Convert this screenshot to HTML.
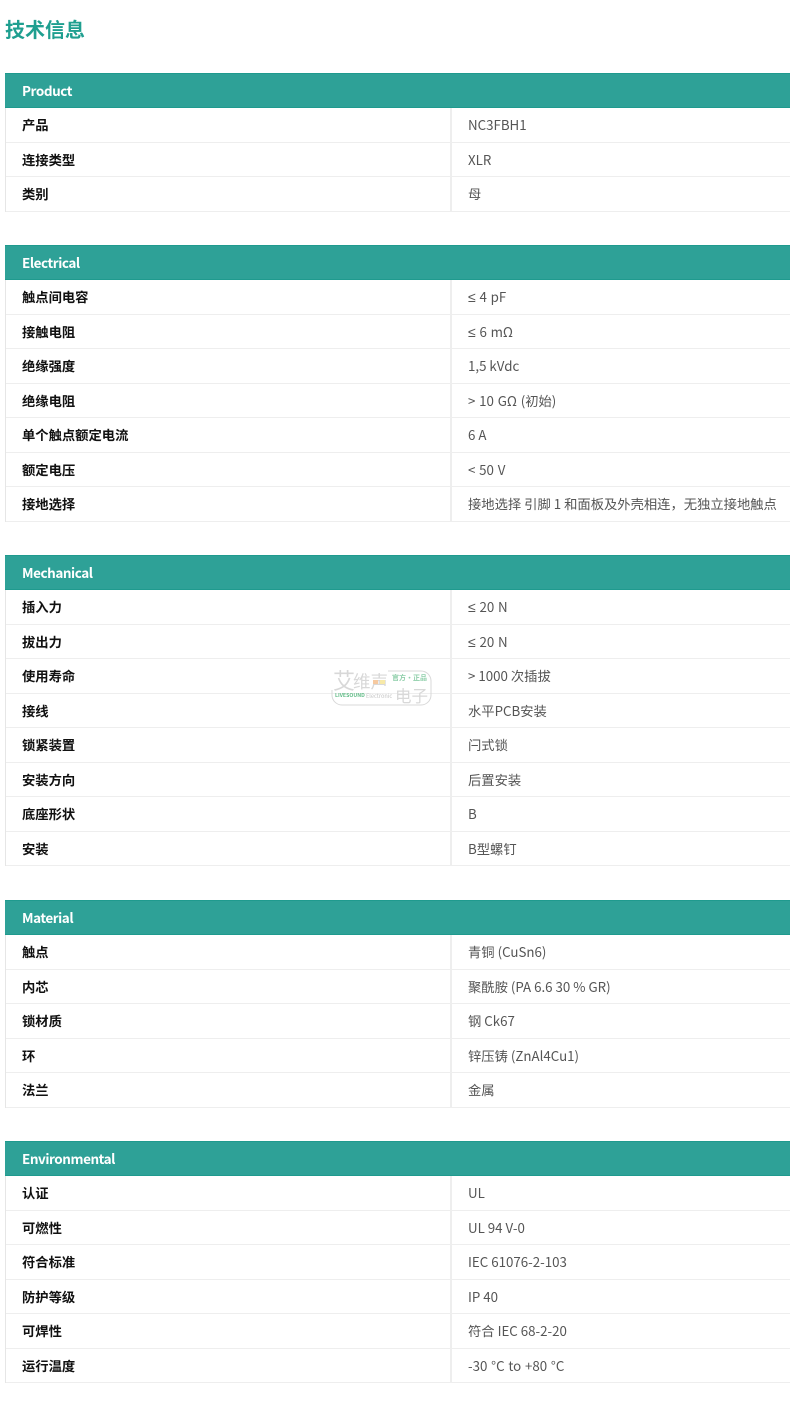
<!DOCTYPE html>
<html lang="zh"><head><meta charset="utf-8"><title>技术信息</title>
<style>
html,body{margin:0;padding:0;background:#fff}
body{width:790px;height:1405px;position:relative;overflow:hidden;font-family:"Liberation Sans","Noto Sans CJK SC",sans-serif}
h1{position:absolute;left:5px;top:14px;margin:0;font-size:20px;line-height:29px;font-weight:700;color:#1f9f90;font-family:"Noto Sans CJK SC",sans-serif}
.t{position:absolute;left:5px;width:785px;border-left:1px solid #e6e6e6;box-sizing:border-box}
.h{height:35px;margin-left:-1px;background:#2ea197;border-top:1px solid #1f9a8e;border-bottom:1px solid #1f9a8e;box-sizing:border-box;color:#fff;font:700 13.5px/32px "Noto Sans CJK SC",sans-serif;letter-spacing:-.45px;padding-left:17px}
.r{height:34.5px;border-bottom:1px solid #eee;box-sizing:border-box;position:relative;font-size:13.3px;line-height:34px;font-family:"Noto Sans CJK SC",sans-serif}
.r b{position:absolute;left:16px;top:0;color:#111;font-weight:700;white-space:nowrap}
.r span{position:absolute;left:444px;top:0;bottom:0;border-left:2px solid #eee;padding-left:16px;color:#555;white-space:nowrap}
.r span.w{word-spacing:.8px}
em{font-style:normal;font-family:"Liberation Sans",sans-serif;font-size:14px}
.wm{position:absolute;left:0;top:0;width:790px;height:1405px;pointer-events:none}
.wm svg{position:absolute;left:0;top:0}
.wm i{position:absolute;font-style:normal;white-space:nowrap;font-family:"Noto Sans CJK SC",sans-serif;color:#d8d8d8}
</style></head><body>
<h1>技术信息</h1>

<div class="t" style="top:73px"><div class="h">Product</div>
<div class="r"><b>产品</b><span>NC3FBH1</span></div>
<div class="r"><b>连接类型</b><span>XLR</span></div>
<div class="r"><b>类别</b><span>母</span></div></div>

<div class="t" style="top:245px"><div class="h">Electrical</div>
<div class="r"><b>触点间电容</b><span class="w"><em>≤</em> 4 pF</span></div>
<div class="r"><b>接触电阻</b><span class="w"><em>≤</em> 6 mΩ</span></div>
<div class="r"><b>绝缘强度</b><span>1,5 kVdc</span></div>
<div class="r"><b>绝缘电阻</b><span class="w">&gt; 10 GΩ (初始)</span></div>
<div class="r"><b>单个触点额定电流</b><span>6 A</span></div>
<div class="r"><b>额定电压</b><span class="w">&lt; 50 V</span></div>
<div class="r"><b>接地选择</b><span>接地选择 引脚 1 和面板及外壳相连，无独立接地触点</span></div></div>

<div class="t" style="top:555px"><div class="h">Mechanical</div>
<div class="r"><b>插入力</b><span class="w"><em>≤</em> 20 N</span></div>
<div class="r"><b>拔出力</b><span class="w"><em>≤</em> 20 N</span></div>
<div class="r"><b>使用寿命</b><span>&gt; 1000 次插拔</span></div>
<div class="r"><b>接线</b><span>水平PCB安装</span></div>
<div class="r"><b>锁紧装置</b><span>闩式锁</span></div>
<div class="r"><b>安装方向</b><span>后置安装</span></div>
<div class="r"><b>底座形状</b><span>B</span></div>
<div class="r"><b>安装</b><span>B型螺钉</span></div></div>

<div class="t" style="top:900px"><div class="h">Material</div>
<div class="r"><b>触点</b><span>青铜 (CuSn6)</span></div>
<div class="r"><b>内芯</b><span>聚酰胺 (PA 6.6 30 % GR)</span></div>
<div class="r"><b>锁材质</b><span>钢 Ck67</span></div>
<div class="r"><b>环</b><span>锌压铸 (ZnAl4Cu1)</span></div>
<div class="r"><b>法兰</b><span>金属</span></div></div>

<div class="t" style="top:1141px"><div class="h">Environmental</div>
<div class="r"><b>认证</b><span>UL</span></div>
<div class="r"><b>可燃性</b><span>UL 94 V-0</span></div>
<div class="r"><b>符合标准</b><span>IEC 61076-2-103</span></div>
<div class="r"><b>防护等级</b><span>IP 40</span></div>
<div class="r"><b>可焊性</b><span>符合 IEC 68-2-20</span></div>
<div class="r"><b>运行温度</b><span class="w">-30 °C to +80 °C</span></div></div>

<div class="wm">
<svg width="790" height="1405" viewBox="0 0 790 1405">
<path d="M388 671H421a10 10 0 0 1 10 10V695a10 10 0 0 1-10 10H342a10 10 0 0 1-10-10V690" fill="none" stroke="#d8d8d8" stroke-width="1"/>
</svg>
<i style="left:333px;top:667px;font-size:22px;line-height:26px">艾</i>
<i style="left:353px;top:671px;font-size:17.5px;line-height:21px">维声</i>
<svg width="790" height="1405" viewBox="0 0 790 1405">
<rect x="373" y="680" width="5" height="4" fill="#f6c9a0"/>
<rect x="380" y="680" width="5" height="4" fill="#f7e9a8"/>
</svg>
<i style="left:392px;top:673px;font-size:7px;line-height:10px;color:#8fcfaa;font-weight:700">官方·正品</i>
<i style="left:335px;top:692px;font-size:5.2px;line-height:8px;color:#5fbb85;font-weight:700">LIVESOUND</i>
<i style="left:366px;top:692px;font-size:5.6px;line-height:8px;color:#c4c4c4">Electronic</i>
<i style="left:395px;top:685px;font-size:16.5px;line-height:20px">电子</i>
</div>
</body></html>
